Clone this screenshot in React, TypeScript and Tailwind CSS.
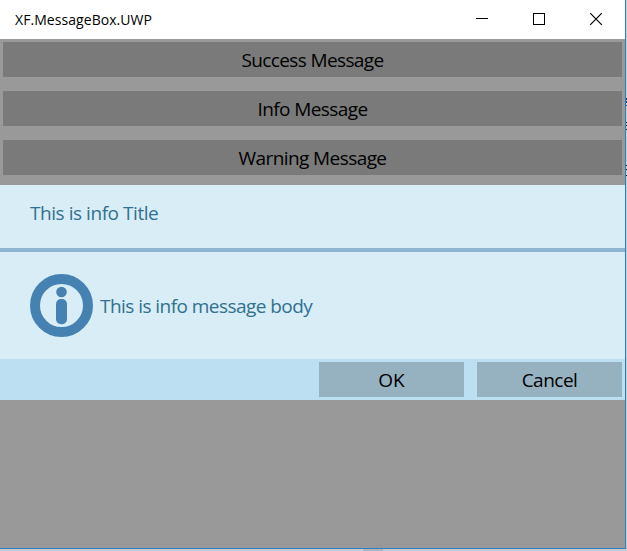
const label = "whitespace-nowrap text-[19px] leading-[26px]";

function ListButton({ text, tracking }: { text: string; tracking: string }) {
  return (
    <button className="flex h-[35px] w-[619px] items-center justify-center bg-[#7a7a7a] text-black">
      <span className={`${label} ${tracking}`}>{text}</span>
    </button>
  );
}

function TitleBar() {
  return (
    <header className="flex h-[39px] items-center justify-between bg-white pl-[15px] text-black">
      <span className="whitespace-nowrap text-[14px] leading-[20px] tracking-[0.06px]">XF.MessageBox.UWP</span>
      <svg width="150" height="39" viewBox="475 0 150 39" fill="none" stroke="#000" shapeRendering="crispEdges">
        <path d="M476 18.5H488" />
        <rect x="533.5" y="13.5" width="11" height="11" />
        <path d="M590.2 13.2L601.8 24.8M601.8 13.2L590.2 24.8" strokeWidth="1.2" shapeRendering="auto" />
      </svg>
    </header>
  );
}

function InfoIcon() {
  return (
    <svg width="63" height="63" viewBox="0 0 63 63" className="shrink-0">
      <circle cx="31.5" cy="31.5" r="26.5" fill="none" stroke="#4682b1" strokeWidth="10" />
      <circle cx="31.5" cy="18" r="5.3" fill="#4682b1" />
      <rect x="26" y="25" width="11" height="25.3" rx="5" fill="#4682b1" />
    </svg>
  );
}

export default function App() {
  return (
    <div className="h-[551px] w-[627px] overflow-hidden bg-[#c9cdd0] font-['Open_Sans','Noto_Sans',sans-serif]">
      <div className="flex h-[549px]">
        <div className="flex w-[626px] flex-col border-r border-b border-[#2681cb] bg-[#999999]">
          <TitleBar />
          <main className="flex h-[146px] flex-col gap-[14px] pt-[3px] pl-[3px]">
            <ListButton text="Success Message" tracking="tracking-[-0.62px]" />
            <ListButton text="Info Message" tracking="tracking-[-0.58px]" />
            <ListButton text="Warning Message" tracking="tracking-[-0.58px]" />
          </main>
          <section className="flex h-[215px] flex-col bg-[#d9edf6] text-[#31708f]">
            <div className="h-[67px] border-b-4 border-[#8fb5d3] pt-[15px] pl-[30px]">
              <h1 className={`${label} tracking-[-0.45px]`}>This is info Title</h1>
            </div>
            <div className="flex h-[107px] items-center gap-[7px] pl-[30px]">
              <InfoIcon />
              <p className={`${label} tracking-[-0.55px]`}>This is info message body</p>
            </div>
            <div className="flex h-[41px] items-center justify-end gap-[13px] bg-[#bcdff1] pr-[3px] text-black">
              <button className="flex h-[35px] w-[145px] items-center justify-center bg-[#96b1bf]">
                <span className={label}>OK</span>
              </button>
              <button className="flex h-[35px] w-[145px] items-center justify-center bg-[#96b1bf]">
                <span className={`${label} tracking-[-0.5px]`}>Cancel</span>
              </button>
            </div>
          </section>
        </div>
        <div className="flex w-px flex-col bg-[#c9cdd0] pt-[98px]">
          <i className="h-[2px] bg-[#173e5f]" />
          <i className="mt-[1px] h-[2px] bg-[#173e5f]" />
          <i className="mt-[2px] h-px bg-[#173e5f]" />
          <i className="mt-[16px] h-px bg-[#222222]" />
          <i className="mt-[2px] h-px bg-[#222222]" />
          <i className="mt-[3px] h-px bg-[#222222]" />
          <i className="mt-[35px] h-px bg-[#222222]" />
          <i className="mt-[3px] h-px bg-[#222222]" />
          <i className="mt-[5px] h-px bg-[#222222]" />
        </div>
      </div>
      <div className="flex h-[2px] pl-[363px]">
        <i className="h-[2px] w-[20px] bg-[#b1b5b8]" />
      </div>
    </div>
  );
}
